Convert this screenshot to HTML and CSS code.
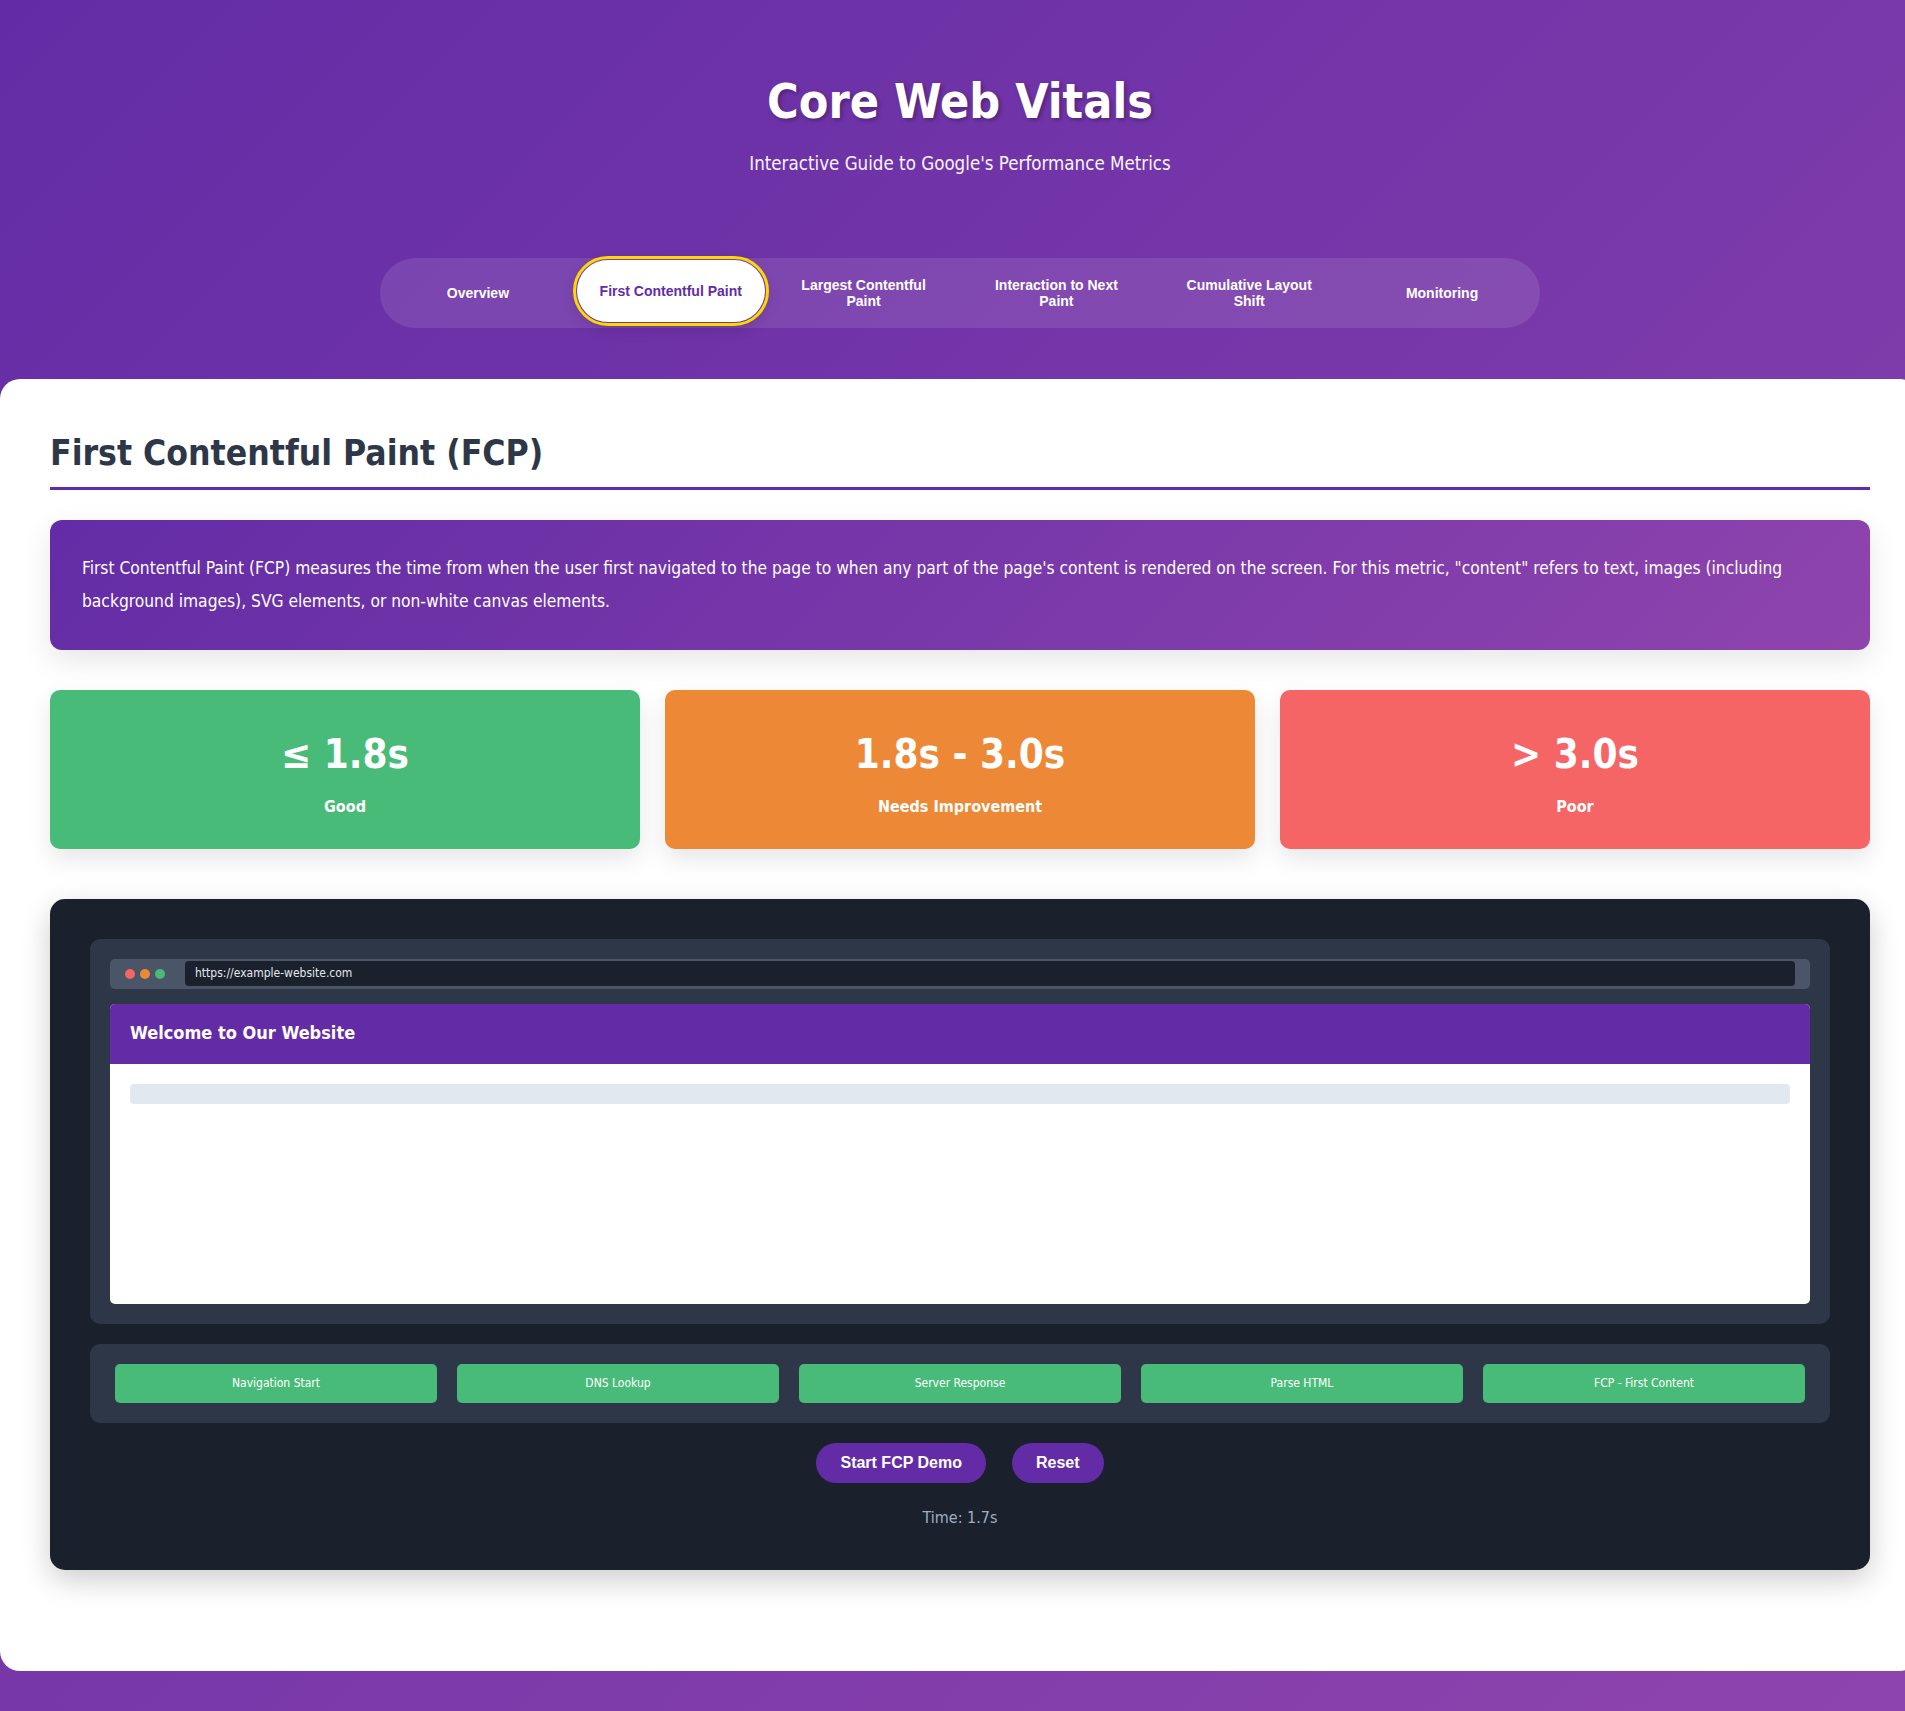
FILE: index.html
```html
<!DOCTYPE html>
<html lang="en">
<head>
<meta charset="utf-8">
<title>Core Web Vitals</title>
<link rel="stylesheet" href="styles.css">
</head>
<body>
<div class="page">
  <header class="hero">
    <h1 class="hero-title">Core Web Vitals</h1>
    <p class="hero-subtitle">Interactive Guide to Google's Performance Metrics</p>
    <nav class="tabs">
      <button class="tab">Overview</button>
      <button class="tab tab-active">First Contentful Paint</button>
      <button class="tab">Largest Contentful Paint</button>
      <button class="tab">Interaction to Next Paint</button>
      <button class="tab">Cumulative Layout Shift</button>
      <button class="tab">Monitoring</button>
    </nav>
  </header>

  <main class="panel">
    <h2 class="section-title">First Contentful Paint (FCP)</h2>
    <div class="definition">
      <p>First Contentful Paint (FCP) measures the time from when the user first navigated to the page to when any part of the page's content is rendered on the screen. For this metric, "content" refers to text, images (including background images), SVG elements, or non-white canvas elements.</p>
    </div>

    <div class="thresholds">
      <div class="threshold threshold-good">
        <div class="threshold-value">≤ 1.8s</div>
        <div class="threshold-label">Good</div>
      </div>
      <div class="threshold threshold-needs">
        <div class="threshold-value">1.8s - 3.0s</div>
        <div class="threshold-label">Needs Improvement</div>
      </div>
      <div class="threshold threshold-poor">
        <div class="threshold-value">&gt; 3.0s</div>
        <div class="threshold-label">Poor</div>
      </div>
    </div>

    <section class="demo">
      <div class="browser">
        <div class="browser-bar">
          <div class="dots">
            <span class="dot dot-red"></span>
            <span class="dot dot-orange"></span>
            <span class="dot dot-green"></span>
          </div>
          <div class="url">https://example-website.com</div>
        </div>
        <div class="site">
          <div class="site-header">Welcome to Our Website</div>
          <div class="site-body">
            <div class="skeleton"></div>
          </div>
        </div>
      </div>

      <div class="timeline">
        <div class="step">Navigation Start</div>
        <div class="step">DNS Lookup</div>
        <div class="step">Server Response</div>
        <div class="step">Parse HTML</div>
        <div class="step">FCP - First Content</div>
      </div>

      <div class="controls">
        <button class="btn">Start FCP Demo</button>
        <button class="btn">Reset</button>
      </div>
      <div class="timer">Time: 1.7s</div>
    </section>
  </main>
</div>
</body>
</html>
```

FILE: styles.css
```css
* {
  box-sizing: border-box;
}

html, body {
  margin: 0;
  padding: 0;
}

body {
  font-family: "DejaVu Sans Condensed", "DejaVu Sans", sans-serif;
  line-height: 1.6;
  color: #2d3748;
  background: linear-gradient(135deg, #632ca6 0%, #8e44ad 100%);
  min-height: 1711px;
  overflow-x: hidden;
}

.page {
  width: 1920px;
  padding-bottom: 40px;
}

/* Hero */
.hero {
  padding: 63px 0 51px;
  text-align: center;
  color: #fff;
}

.hero-title {
  margin: 0 0 9px;
  font-size: 48px;
  font-weight: 700;
  line-height: 1.6;
  text-shadow: 2px 2px 4px rgba(0, 0, 0, 0.3);
}

.hero-subtitle {
  margin: 0;
  font-size: 18.6px;
  line-height: 1.6;
  opacity: 0.95;
}

.tabs {
  display: flex;
  gap: 5px;
  width: 1160px;
  margin: 79px auto 0;
  padding: 4px;
  background: rgba(255, 255, 255, 0.1);
  border-radius: 40px;
}

.tab {
  flex: 1;
  padding: 15px 20px;
  border: none;
  border-radius: 32px;
  background: transparent;
  color: #fff;
  font-family: "Liberation Sans", Arial, sans-serif;
  font-size: 14px;
  font-weight: 700;
  line-height: normal;
  cursor: pointer;
}

.tab-active {
  background: #fff;
  color: #632ca6;
  transform: translateY(-2px);
  outline: 3px solid #ffd700;
  outline-offset: 1px;
  box-shadow: 0 5px 15px rgba(0, 0, 0, 0.2);
}

/* Panel */
.panel {
  background: #fff;
  border-radius: 20px;
  padding: 50px 50px 50px;
}

.section-title {
  margin: 0 0 30px;
  padding-bottom: 11px;
  font-size: 35.2px;
  font-weight: 700;
  line-height: 1.35;
  color: #2d3748;
  border-bottom: 3px solid #632ca6;
}

.definition {
  background: linear-gradient(135deg, #632ca6 0%, #8e44ad 100%);
  color: #fff;
  padding: 32px;
  border-radius: 12px;
  box-shadow: 0 10px 30px rgba(0, 0, 0, 0.1);
  margin-bottom: 40px;
}

.definition p {
  margin: 0;
  font-size: 17.25px;
  line-height: 33px;
}

.thresholds {
  display: grid;
  grid-template-columns: repeat(3, 1fr);
  gap: 25px;
  margin-bottom: 50px;
}

.threshold {
  padding: 32px 32px 29px;
  border-radius: 10px;
  text-align: center;
  color: #fff;
  box-shadow: 0 10px 25px rgba(0, 0, 0, 0.1);
}

.threshold-good { background: #48bb78; }
.threshold-needs { background: #ed8936; }
.threshold-poor { background: #f56565; }

.threshold-value {
  font-size: 40px;
  font-weight: 700;
  margin-bottom: 8px;
}

.threshold-label {
  font-size: 16px;
  font-weight: 700;
}

/* Demo */
.demo {
  background: #1a202c;
  border-radius: 15px;
  padding: 40px;
  margin-bottom: 51px;
  box-shadow: 0 10px 30px rgba(0, 0, 0, 0.2);
}

.browser {
  background: #2d3748;
  border-radius: 10px;
  padding: 20px;
}

.browser-bar {
  display: flex;
  align-items: center;
  height: 30px;
  padding: 0 15px;
  background: #4a5568;
  border-radius: 5px;
  margin-bottom: 15px;
}

.dots {
  display: flex;
  gap: 5px;
  margin-right: 20px;
}

.dot {
  width: 10px;
  height: 10px;
  border-radius: 50%;
}

.dot-red { background: #f56565; }
.dot-orange { background: #ed8936; }
.dot-green { background: #48bb78; }

.url {
  flex: 1;
  background: #1a202c;
  color: #e2e8f0;
  font-size: 12px;
  line-height: 1.6;
  padding: 3px 10px;
  border-radius: 4px;
}

.site {
  background: #fff;
  border-radius: 5px;
  min-height: 300px;
  overflow: hidden;
}

.site-header {
  background: #632ca6;
  color: #fff;
  font-size: 18px;
  font-weight: 700;
  padding: 15.6px 20px;
}

.site-body {
  padding: 20px;
}

.skeleton {
  height: 20px;
  background: #e2e8f0;
  border-radius: 4px;
}

.timeline {
  display: flex;
  gap: 20px;
  margin-top: 20px;
  padding: 20px 25px;
  background: #2d3748;
  border-radius: 10px;
}

.step {
  flex: 1;
  background: #48bb78;
  color: #fff;
  font-size: 12px;
  text-align: center;
  padding: 10px;
  border-radius: 5px;
}

.controls {
  display: flex;
  justify-content: center;
  gap: 26px;
  margin-top: 20px;
}

.btn {
  border: none;
  background: #632ca6;
  color: #fff;
  font-family: "Liberation Sans", Arial, sans-serif;
  font-size: 16px;
  font-weight: 700;
  line-height: normal;
  padding: 11px 24px;
  border-radius: 25px;
  cursor: pointer;
}

.timer {
  margin-top: 22px;
  text-align: center;
  color: #a0aec0;
  font-size: 16px;
}
```
